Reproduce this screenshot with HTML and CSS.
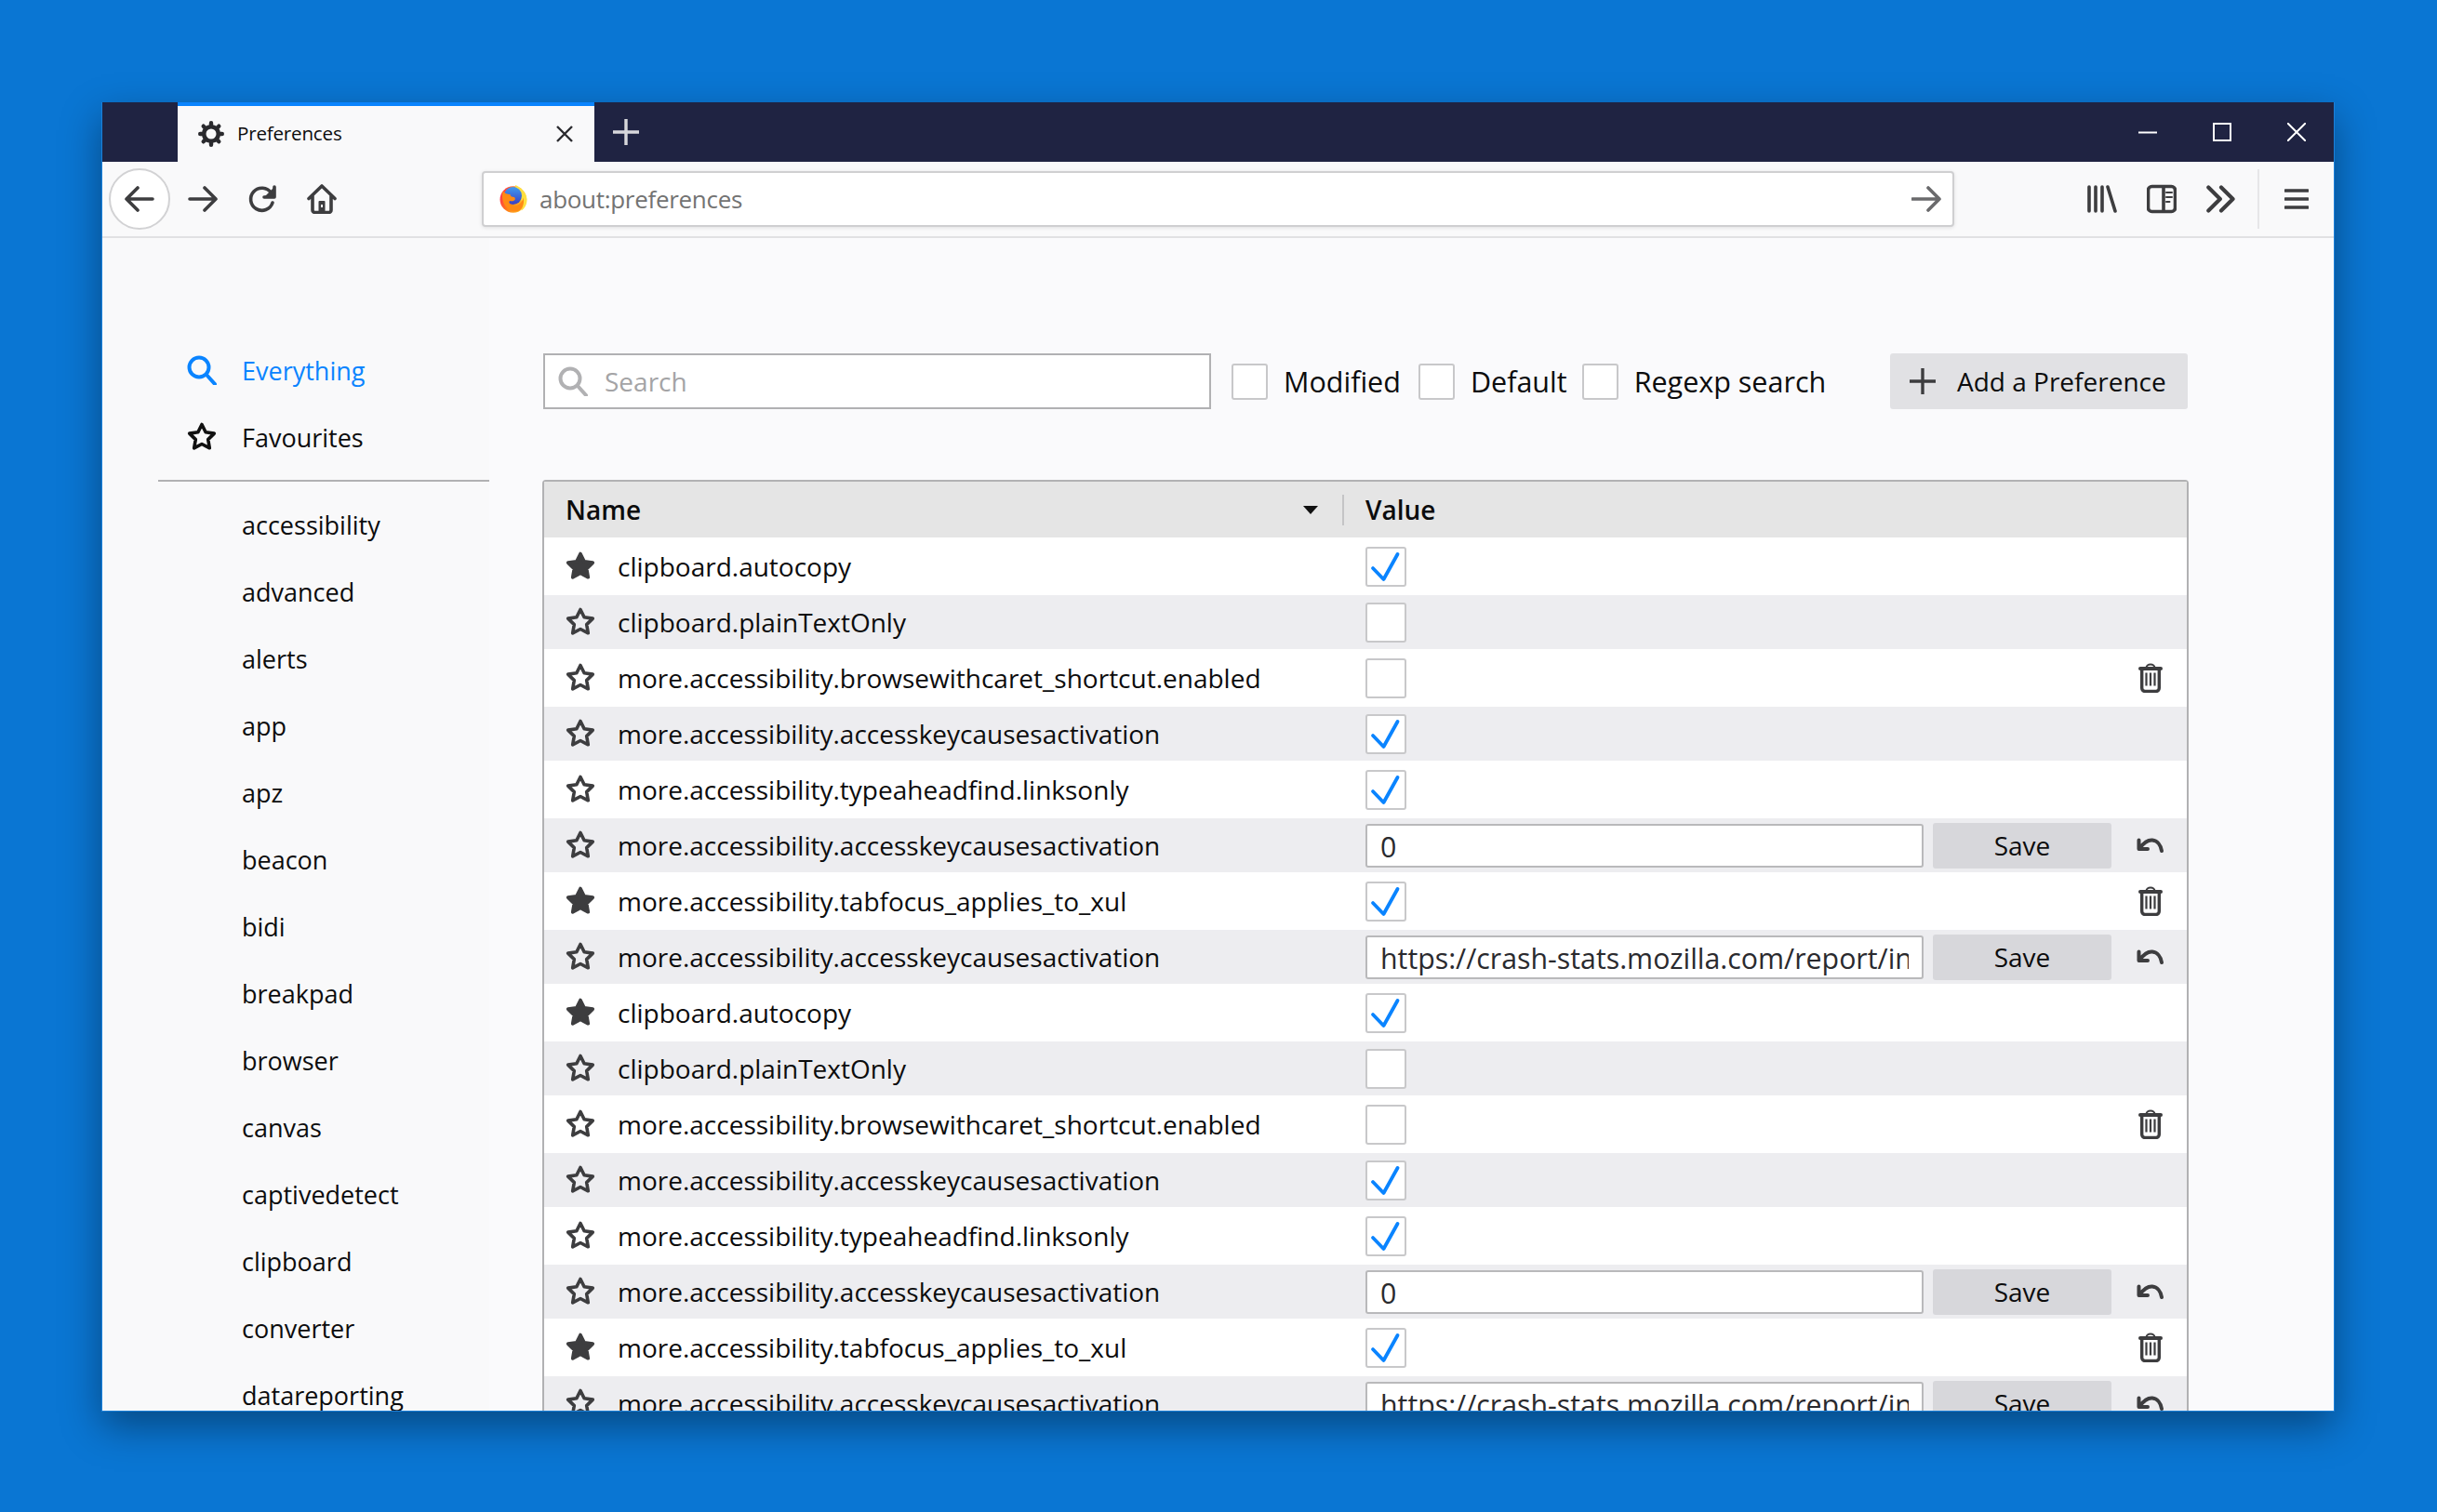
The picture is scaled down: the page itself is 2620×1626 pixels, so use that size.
FILE: index.html
```html
<!DOCTYPE html>
<html lang="en">
<head>
<meta charset="utf-8">
<title>Preferences</title>
<link rel="stylesheet" href="styles.css">
</head>
<body>
<svg class="sprite" width="0" height="0" aria-hidden="true">
  <symbol id="i-star" viewBox="0 0 32 32"><path d="M16 2.500l4.100 8.300 9.200 1.300-6.600 6.500 1.600 9.200L16 23.500l-8.300 4.300 1.600-9.200-6.600-6.500 9.200-1.300z"/></symbol>
  <symbol id="i-check" viewBox="0 0 44 43"><path d="M8 23l11.500 12L34.500 8"/></symbol>
  <symbol id="i-trash" viewBox="0 0 26 32">
    <path fill="none" stroke="currentColor" stroke-width="2" d="M8.500 5a4.500 3.600 0 0 1 9 0"/>
    <rect x="0" y="4" width="26" height="4" rx="2" fill="currentColor"/>
    <path fill="none" stroke="currentColor" stroke-width="3.400" d="M3.700 7v20a3.500 3.500 0 0 0 3.500 3.500h11.600a3.500 3.500 0 0 0 3.500-3.500V7"/>
    <path fill="none" stroke="currentColor" stroke-width="2.200" d="M8.500 10.500v14M13 10.500v14M17.500 10.500v14"/>
  </symbol>
  <symbol id="i-undo" viewBox="0 0 30 16"><path fill="none" stroke="currentColor" stroke-width="4" stroke-linecap="round" stroke-linejoin="round" d="M2.500 2.500v9.500H12M3.500 11C8 5 12 2 17 2.500c5 .5 9 5 10 11.500"/></symbol>
</svg>
<div class="window">
  <header class="tabbar">
    <div class="tab">
      <svg class="gear" viewBox="0 0 28 28"><circle cx="14" cy="14" r="7.800" fill="none" stroke="#2a2a2e" stroke-width="4.600"/><path fill="none" stroke="#2a2a2e" stroke-width="4.400" stroke-linecap="round" d="M14 2.200v3M14 22.800v3M2.200 14h3M22.800 14h3M5.700 5.700l2 2M20.300 20.300l2 2M22.300 5.700l-2 2M7.700 20.300l-2 2"/></svg>
      <span class="tab-title">Preferences</span>
      <svg class="tab-close" viewBox="0 0 20 20"><path d="M2 2l16 16M18 2L2 18"/></svg>
    </div>
    <svg class="newtab" viewBox="0 0 28 28"><path d="M14 0v28M0 14h28"/></svg>
    <div class="winctl">
      <svg class="wc" viewBox="0 0 20 20"><path d="M0 10.500h20"/></svg>
      <svg class="wc" viewBox="0 0 20 20"><path d="M1 1h18v18H1z"/></svg>
      <svg class="wc" viewBox="0 0 20 20"><path d="M0 0l20 20M20 0L0 20"/></svg>
    </div>
  </header>
  <nav class="toolbar">
    <div class="backbtn"><svg class="tbi" viewBox="0 0 32 32"><path d="M2 16h28M14 4L2 16l12 12"/></svg></div>
    <svg class="tbi fwd" viewBox="0 0 32 32"><path d="M2 16h28M18 4l12 12-12 12"/></svg>
    <svg class="tbi rel" viewBox="0 0 32 32"><path d="M27 20a12 12 0 1 1-1.500-10.500"/><path class="solid" d="M29 3v11H18z"/><path d="M29 3v11H18"/></svg>
    <svg class="tbi home" viewBox="0 0 32 32"><path d="M2 15.500L16 2l14 13.500M6 12v16a2.500 2.500 0 0 0 2.500 2.500h15A2.500 2.500 0 0 0 26 28V12"/><path class="solid" d="M12.500 30V19a1 1 0 0 1 1-1h5a1 1 0 0 1 1 1v11zM15 22v3h2v-3z" fill-rule="evenodd"/></svg>
    <div class="urlbar">
      <svg class="fx" viewBox="0 0 30 30">
        <defs>
          <linearGradient id="fxa" x1="0" y1="0.200" x2="1" y2="0.600"><stop offset="0" stop-color="#ff2d55"/><stop offset=".45" stop-color="#ff7a18"/><stop offset="1" stop-color="#ffcb2e"/></linearGradient>
          <linearGradient id="fxb" x1="0" y1="0" x2="0" y2="1"><stop offset="0" stop-color="#3f9bf0"/><stop offset="1" stop-color="#3b3fc4"/></linearGradient>
        </defs>
        <circle cx="14.800" cy="15.500" r="14.300" fill="url(#fxa)"/>
        <path fill="#ffe040" d="M17 0c6 2 12 8 12.500 15 .3 5-2 10-6 12.500 2-4 1.500-9-1-13-2-3.500-5.500-8-5.500-14.500z"/>
        <circle cx="14.500" cy="11.500" r="9.500" fill="url(#fxb)"/>
        <path fill="#ff8a14" d="M3.500 7C1 18 8 28.500 17 28.500c7 0 10.500-8 8.500-15-1 6-6 9.500-11 8.500-3.500-.7-5-3.500-3.500-5 4 1 7.500-1 5-4-3 0-4.500-1-4.500-3-4 0-5-1-8-3.500z"/>
      </svg>
      <span class="url">about:preferences</span>
      <svg class="go" viewBox="0 0 32 32"><path d="M1 16h29M18 4l12 12-12 12"/></svg>
    </div>
    <div class="tb-right">
      <svg class="tbi" viewBox="0 0 32 30"><path d="M2 2v26M9 2v26M16 2v26M22 2l8 26"/></svg>
      <svg class="tbi" viewBox="0 0 32 30"><rect x="1.500" y="1.500" width="29" height="27" rx="4"/><path d="M18 2v26"/><path class="thin" d="M21 8h6M21 13h6M21 18h3.500"/></svg>
      <svg class="tbi" viewBox="0 0 28 28"><path d="M2 3l11 11L2 25M14 3l11 11-11 11"/></svg>
      <span class="tb-sep"></span>
      <svg class="tbi burger" viewBox="0 0 26 24"><path d="M1 3h24M1 12h24M1 21h24"/></svg>
    </div>
  </nav>
  <div class="content">
    <aside class="sidebar">
      <a class="side-item active"><svg class="side-ico" viewBox="0 0 32 32"><circle cx="13" cy="13" r="10.500"/><path d="M21 21l9 10"/></svg><span>Everything</span></a>
      <a class="side-item"><svg class="side-star"><use href="#i-star"/></svg><span>Favourites</span></a>
      <div class="side-rule"></div>
      <a class="side-item sub">accessibility</a>
      <a class="side-item sub">advanced</a>
      <a class="side-item sub">alerts</a>
      <a class="side-item sub">app</a>
      <a class="side-item sub">apz</a>
      <a class="side-item sub">beacon</a>
      <a class="side-item sub">bidi</a>
      <a class="side-item sub">breakpad</a>
      <a class="side-item sub">browser</a>
      <a class="side-item sub">canvas</a>
      <a class="side-item sub">captivedetect</a>
      <a class="side-item sub">clipboard</a>
      <a class="side-item sub">converter</a>
      <a class="side-item sub">datareporting</a>
    </aside>
    <main class="main">
      <div class="filters">
        <div class="search">
          <svg class="search-ico" viewBox="0 0 32 32"><circle cx="13" cy="13" r="10.500"/><path d="M21 21l9 10"/></svg>
          <span>Search</span>
        </div>
        <label class="flt flt-1"><i class="box"></i>Modified</label>
        <label class="flt flt-2"><i class="box"></i>Default</label>
        <label class="flt flt-3"><i class="box"></i>Regexp search</label>
        <button class="add"><svg class="add-ico" viewBox="0 0 28 28"><path d="M14 0v28M0 14h28"/></svg>Add a Preference</button>
      </div>
      <div class="table">
        <div class="thead">
          <div class="th-name">Name<i class="sort"></i></div>
          <i class="th-sep"></i>
          <div class="th-val">Value</div>
        </div>

        <div class="row"><svg class="star on"><use href="#i-star"/></svg><span class="name">clipboard.autocopy</span><div class="val"><i class="cb"><svg class="tick"><use href="#i-check"/></svg></i></div></div>
        <div class="row"><svg class="star"><use href="#i-star"/></svg><span class="name">clipboard.plainTextOnly</span><div class="val"><i class="cb"></i></div></div>
        <div class="row"><svg class="star"><use href="#i-star"/></svg><span class="name">more.accessibility.browsewithcaret_shortcut.enabled</span><div class="val"><i class="cb"></i><svg class="act trash"><use href="#i-trash"/></svg></div></div>
        <div class="row"><svg class="star"><use href="#i-star"/></svg><span class="name">more.accessibility.accesskeycausesactivation</span><div class="val"><i class="cb"><svg class="tick"><use href="#i-check"/></svg></i></div></div>
        <div class="row"><svg class="star"><use href="#i-star"/></svg><span class="name">more.accessibility.typeaheadfind.linksonly</span><div class="val"><i class="cb"><svg class="tick"><use href="#i-check"/></svg></i></div></div>
        <div class="row"><svg class="star"><use href="#i-star"/></svg><span class="name">more.accessibility.accesskeycausesactivation</span><div class="val"><div class="input"><span class="input-text">0</span></div><button class="save">Save</button><svg class="act undo"><use href="#i-undo"/></svg></div></div>
        <div class="row"><svg class="star on"><use href="#i-star"/></svg><span class="name">more.accessibility.tabfocus_applies_to_xul</span><div class="val"><i class="cb"><svg class="tick"><use href="#i-check"/></svg></i><svg class="act trash"><use href="#i-trash"/></svg></div></div>
        <div class="row"><svg class="star"><use href="#i-star"/></svg><span class="name">more.accessibility.accesskeycausesactivation</span><div class="val"><div class="input"><span class="input-text">https://crash-stats.mozilla.com/report/index</span></div><button class="save">Save</button><svg class="act undo"><use href="#i-undo"/></svg></div></div>

        <div class="row"><svg class="star on"><use href="#i-star"/></svg><span class="name">clipboard.autocopy</span><div class="val"><i class="cb"><svg class="tick"><use href="#i-check"/></svg></i></div></div>
        <div class="row"><svg class="star"><use href="#i-star"/></svg><span class="name">clipboard.plainTextOnly</span><div class="val"><i class="cb"></i></div></div>
        <div class="row"><svg class="star"><use href="#i-star"/></svg><span class="name">more.accessibility.browsewithcaret_shortcut.enabled</span><div class="val"><i class="cb"></i><svg class="act trash"><use href="#i-trash"/></svg></div></div>
        <div class="row"><svg class="star"><use href="#i-star"/></svg><span class="name">more.accessibility.accesskeycausesactivation</span><div class="val"><i class="cb"><svg class="tick"><use href="#i-check"/></svg></i></div></div>
        <div class="row"><svg class="star"><use href="#i-star"/></svg><span class="name">more.accessibility.typeaheadfind.linksonly</span><div class="val"><i class="cb"><svg class="tick"><use href="#i-check"/></svg></i></div></div>
        <div class="row"><svg class="star"><use href="#i-star"/></svg><span class="name">more.accessibility.accesskeycausesactivation</span><div class="val"><div class="input"><span class="input-text">0</span></div><button class="save">Save</button><svg class="act undo"><use href="#i-undo"/></svg></div></div>
        <div class="row"><svg class="star on"><use href="#i-star"/></svg><span class="name">more.accessibility.tabfocus_applies_to_xul</span><div class="val"><i class="cb"><svg class="tick"><use href="#i-check"/></svg></i><svg class="act trash"><use href="#i-trash"/></svg></div></div>
        <div class="row"><svg class="star"><use href="#i-star"/></svg><span class="name">more.accessibility.accesskeycausesactivation</span><div class="val"><div class="input"><span class="input-text">https://crash-stats.mozilla.com/report/index</span></div><button class="save">Save</button><svg class="act undo"><use href="#i-undo"/></svg></div></div>
      </div>
    </main>
  </div>
</div>
</body>
</html>
```
FILE: styles.css
```css
* { box-sizing: border-box; }
html, body { margin: 0; height: 100%; }
body {
  background: #0a76d3;
  padding: 110px 0 0 109px;
  font-family: "Open Sans", "Noto Sans", sans-serif;
  color: #0c0c0d;
  overflow: hidden;
}
.sprite { position: absolute; }
.window {
  width: 2401px;
  height: 1408px;
  overflow: hidden;
  display: flex;
  flex-direction: column;
  background: #fafafc;
  border: solid #1b80d9;
  border-width: 0 1px 1px;
  box-shadow: 0 16px 40px rgba(0, 0, 0, .38);
}

/* tab bar */
.tabbar {
  height: 64px;
  flex: none;
  background: #1f2342;
  display: flex;
  align-items: stretch;
}
.tab {
  margin-left: 81px;
  width: 448px;
  background: #f9f9fa;
  border-top: 4px solid #0a84ff;
  display: flex;
  align-items: center;
  padding: 0 22px 0 22px;
}
.gear { width: 28px; height: 28px; flex: none; }
.tab-title { margin-left: 14px; font-size: 20.600px; flex: 1; letter-spacing: -.2px; padding-bottom: 3px; }
.tab-close { width: 20px; height: 20px; fill: none; stroke: #2a2a2e; stroke-width: 2.400; }
.newtab {
  width: 28px; height: 28px;
  margin: 18px 0 0 20px;
  fill: none; stroke: #d7d7db; stroke-width: 3.400;
}
.winctl {
  margin-left: auto;
  display: flex;
  gap: 60px;
  padding: 22px 30px 0 0;
}
.wc { width: 20px; height: 20px; fill: none; stroke: #fff; stroke-width: 2; }

/* toolbar */
.toolbar {
  height: 82px;
  flex: none;
  background: #f9f9fa;
  border-bottom: 2px solid #e1e1e3;
  display: flex;
  align-items: center;
  padding-left: 7px;
}
.tbi {
  width: 32px; height: 32px;
  flex: none;
  fill: none;
  stroke: #3d3d3f;
  stroke-width: 3.600;
  stroke-linecap: round;
  stroke-linejoin: round;
}
.tbi .solid { fill: #3d3d3f; stroke: none; }
.tbi .thin { stroke-width: 2; }
.backbtn {
  width: 66px; height: 66px;
  flex: none;
  border-radius: 50%;
  background: #fff;
  border: 2px solid #d2d2d4;
  display: flex;
  align-items: center;
  justify-content: center;
}
.fwd { margin-left: 19px; }
.rel { margin-left: 32px; }
.home { margin-left: 32px; }
.urlbar {
  width: 1583px;
  height: 60px;
  flex: none;
  margin-left: 156px;
  background: #fff;
  border: 2px solid #cfcfd1;
  border-radius: 4px;
  display: flex;
  align-items: center;
  padding: 0 12px 0 17px;
  box-shadow: 0 1px 4px rgba(0, 0, 0, .1);
}
.fx { width: 30px; height: 30px; flex: none; }
.url { margin-left: 13px; flex: 1; font-size: 26px; color: #737373; letter-spacing: -.3px; }
.go { width: 32px; height: 32px; fill: none; stroke: #6a6a6c; stroke-width: 3.600; stroke-linecap: round; stroke-linejoin: round; }
.tb-right {
  display: flex;
  align-items: center;
  margin-left: 143px;
}
.tb-right .tbi + .tbi { margin-left: 32px; }
.tb-sep { width: 2px; height: 64px; background: #e6e6e8; margin: 0 27px 0 23px; }
.tb-right .burger { width: 26px; height: 24px; margin: 0; }

/* content */
.content {
  flex: 1;
  min-height: 0;
  display: flex;
  overflow: hidden;
}
.sidebar {
  width: 416px;
  flex: none;
  background: #f9f9fa;
  padding-top: 106px;
}
.side-item {
  height: 72px;
  padding-left: 91px;
  display: flex;
  align-items: center;
  font-size: 27px;
  color: #0c0c0d;
}
.side-item.sub { padding-left: 150px; }
.side-item.active { color: #0a84ff; }
.side-ico { width: 32px; height: 32px; margin-right: 27px; fill: none; stroke: #0a84ff; stroke-width: 4; stroke-linecap: round; }
.side-star { width: 32px; height: 32px; margin-right: 27px; fill: none; stroke: #111; stroke-width: 3.600; stroke-linejoin: round; }
.side-rule { height: 2px; background: #b1b1b3; margin: 10px 0 10px 60px; }

.main {
  flex: 1;
  min-width: 0;
  padding: 124px 0 0 57px;
}
.filters {
  height: 60px;
  display: flex;
  align-items: center;
  width: 1769px;
}
.search {
  width: 718px;
  height: 60px;
  margin-left: 1px;
  flex: none;
  background: #fff;
  border: 2px solid #b1b1b3;
  display: flex;
  align-items: center;
  padding-left: 14px;
  font-size: 28px;
  color: #a4a4a6;
}
.search-ico { width: 32px; height: 32px; margin-right: 18px; fill: none; stroke: #b1b1b3; stroke-width: 4; stroke-linecap: round; }
.flt {
  display: flex;
  align-items: center;
  font-size: 30.500px;
  color: #0c0c0d;
}
.flt-1 { margin-left: 22px; }
.flt-2 { margin-left: 19px; }
.flt-3 { margin-left: 16px; }
.box {
  width: 39px; height: 39px;
  flex: none;
  margin-right: 17px;
  background: #fff;
  border: 2px solid #c8c8ca;
  border-radius: 3px;
}
.add {
  margin-left: auto;
  width: 320px;
  height: 60px;
  flex: none;
  border: 0;
  border-radius: 3px;
  background: #e1e1e4;
  display: flex;
  align-items: center;
  padding: 0 0 0 21px;
  font: inherit;
  font-size: 28px;
  color: #0c0c0d;
}
.add-ico { width: 28px; height: 28px; margin-right: 23px; fill: none; stroke: #3d3d3f; stroke-width: 3.400; }

.table {
  margin-top: 76px;
  width: 1770px;
  border: 2px solid #b1b1b3;
  border-bottom: 0;
  border-radius: 4px 4px 0 0;
  background: #fff;
}
.thead {
  height: 60px;
  background: #e5e5e5;
  display: flex;
  align-items: center;
  font-size: 28px;
  font-weight: 600;
}
.th-name {
  width: 858px;
  padding-left: 23px;
  padding-right: 26px;
  display: flex;
  align-items: center;
  justify-content: space-between;
}
.sort {
  width: 0; height: 0;
  border-left: 8px solid transparent;
  border-right: 8px solid transparent;
  border-top: 9px solid #111;
}
.th-sep { width: 2px; height: 33px; background: #c4c4c6; flex: none; }
.th-val { padding-left: 23px; }

.row {
  height: 62px;
  display: flex;
  align-items: center;
  padding-left: 23px;
}
.row:nth-child(odd) { height: 58px; background: #ededf0; }
.star {
  width: 32px; height: 32px;
  flex: none;
  fill: none;
  stroke: #3d3d3f;
  stroke-width: 3.600;
  stroke-linejoin: round;
}
.star.on { fill: #3d3d3f; }
.name {
  width: 828px;
  flex: none;
  padding-left: 24px;
  font-size: 28px;
  white-space: nowrap;
}
.val {
  flex: 1;
  min-width: 0;
  display: flex;
  align-items: center;
  padding-right: 23px;
}
.cb {
  width: 44px; height: 43px;
  flex: none;
  display: block;
  background: #fff;
  border: 2px solid #c8c8ca;
  border-radius: 3px;
}
.tick { display: block; margin: -2px; width: 44px; height: 43px; fill: none; stroke: #0a84ff; stroke-width: 3.800; stroke-linecap: round; stroke-linejoin: round; }
.input {
  width: 600px;
  height: 47px;
  flex: none;
  background: #fff;
  border: 2px solid #b9b9bb;
  border-radius: 3px;
  padding: 3px 14px 0 14px;
  font-size: 30.300px;
  line-height: 40px;
  color: #2a2a2e;
}
.input-text {
  display: block;
  overflow: hidden;
  white-space: nowrap;
}
.save {
  width: 192px;
  height: 49px;
  margin-left: 10px;
  flex: none;
  border: 0;
  border-radius: 3px;
  background: #d7d7db;
  font: inherit;
  font-size: 28px;
  color: #0c0c0d;
}
.act { margin-left: auto; flex: none; color: #3d3d3f; }
.trash { width: 26px; height: 32px; margin-right: 3px; }
.undo { width: 30px; height: 16px; margin-right: 1px; }
```
